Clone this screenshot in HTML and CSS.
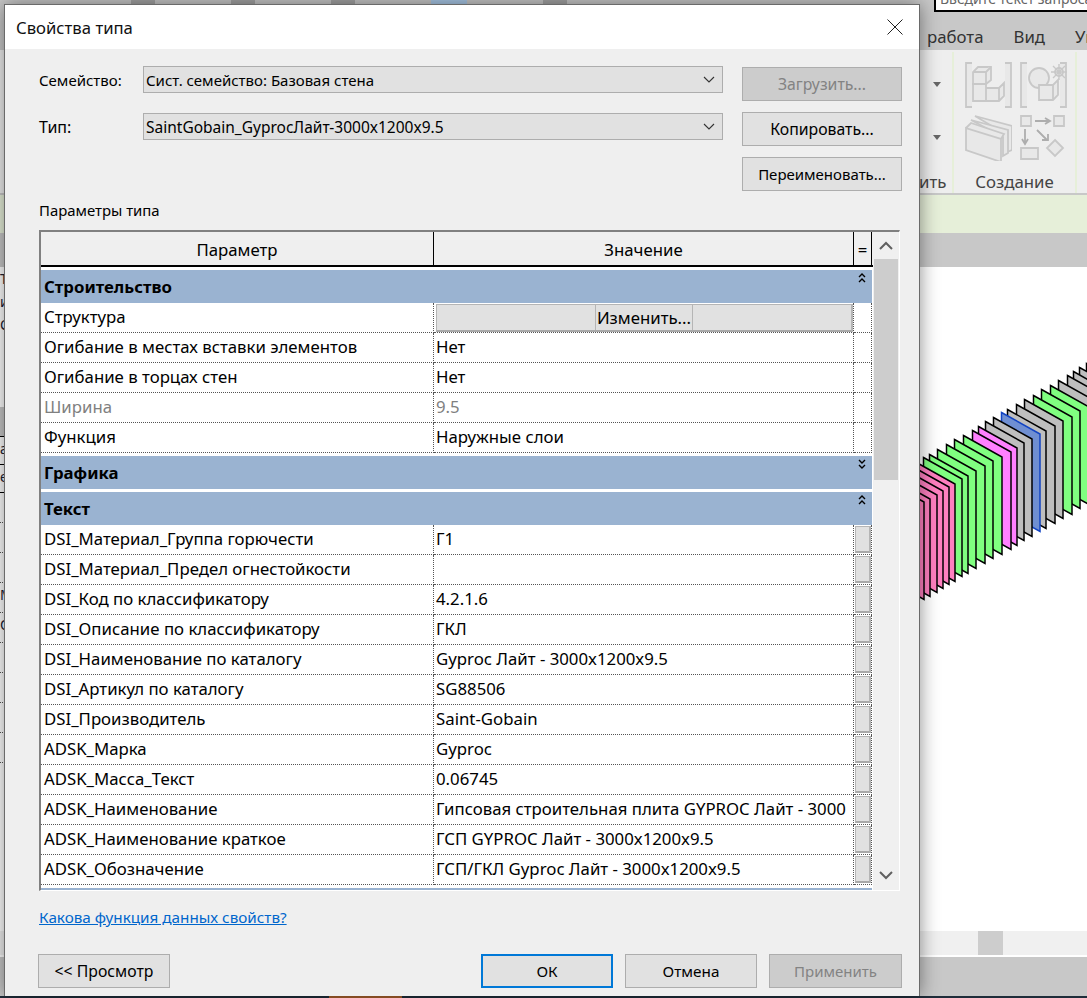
FILE: index.html
```html
<!DOCTYPE html>
<html lang="ru">
<head>
    <meta charset="UTF-8">
    <title>Свойства типа</title>
    <link rel="stylesheet" href="styles.css">
</head>
<body>
    <div class="app">
        <div class="app-top">
            <div class="quick-bar">
                <span class="quick-item"></span>
                <span class="quick-item"></span>
                <span class="quick-item"></span>
                <span class="quick-item quick-active"></span>
                <span class="quick-item"></span>
            </div>
            <div class="search-box">Введите текст запроса</div>
            <div class="tabs">
                <span>работа</span>
                <span>Вид</span>
                <span>Управление</span>
            </div>
        </div>

        <div class="ribbon">
            <div class="ribbon-panel panel-small">
                <div class="panel-body">
                    <span class="drop"></span>
                    <span class="drop"></span>
                </div>
                <span class="panel-label">ить</span>
            </div>
            <div class="ribbon-panel panel-create">
                <div class="panel-icons">
                    <svg class="ribbon-icon" viewBox="0 0 47 46">
                        <path d="M7 1H1V45H7M40 1H46V45H40"/>
                        <path d="M8 22V10L13 5H26V18L21 22Z"/>
                        <path d="M8 10H21L26 5M21 10V22"/>
                        <path d="M8 22H21V39H8ZM21 26H34L39 21V34L34 39H21ZM34 26V39"/>
                    </svg>
                    <svg class="ribbon-icon" viewBox="0 0 47 46">
                        <path d="M7 1H1V45H7M40 1H46V45H40"/>
                        <circle cx="19" cy="16" r="10"/>
                        <circle cx="39" cy="10" r="4"/>
                        <path d="M39 2V18M31 10H47M33 4L45 16M45 4L33 16" class="thin"/>
                        <path d="M19 23H33L38 18V33L33 38H19ZM33 23V38"/>
                    </svg>
                    <svg class="ribbon-icon" viewBox="0 0 47 46">
                        <path d="M10 1L47 11V35L42 37V20Z"/>
                        <path d="M6 5L43 15V38L38 41V22Z"/>
                        <path d="M1 13L6 8L39 19L36 24ZM1 13L36 24V47L1 35Z"/>
                    </svg>
                    <svg class="ribbon-icon" viewBox="0 0 47 46">
                        <path d="M1 1H11V11H1ZM34 1H44V11H34ZM1 33H18V44H1ZM35 25L43 33L35 41L27 33Z"/>
                        <path d="M15 6H29M25 3L30 6L25 9M5 14V28M2 24L5 29L8 24M17 15L27 25M22 25H28V19" class="dark"/>
                    </svg>
                </div>
                <span class="panel-label">Создание</span>
            </div>
            <div class="ribbon-rest"></div>
        </div>

        <div class="context-bar"></div>
        <div class="view-tabs"></div>

        <div class="canvas">
            <div class="side-list">
                <span class="side-row">Т</span>
                <span class="side-row">и</span>
                <span class="side-row">С</span>
                <span class="side-gap"></span>
                <span class="side-head"></span>
                <span class="side-row side-line">а</span>
                <span class="side-row side-line">е</span>
                <span class="side-row side-dots"></span>
                <span class="side-row side-dots"></span>
                <span class="side-row side-dots"></span>
                <span class="side-row side-dots">М</span>
                <span class="side-row side-dots">О</span>
                <span class="side-row side-dots"></span>
                <span class="side-row side-dots"></span>
                <span class="side-row side-dots"></span>
                <span class="side-row side-dots"></span>
            </div>
            <svg class="walls" viewBox="880 350 207 260">
                <defs>
                    <polygon id="plate" points="0,0 38.5,21.5 38.5,119 0,97.5"/>
                </defs>
                <g class="plate-gray">
                    <use href="#plate" x="1086.5" y="363.5"/>
                    <use href="#plate" x="1079.5" y="367.5"/>
                    <use href="#plate" x="1073.5" y="371.5"/>
                    <use href="#plate" x="1067.5" y="375.5"/>
                    <use href="#plate" x="1058.5" y="380.5"/>
                </g>
                <g class="plate-green">
                    <use href="#plate" x="1050.5" y="385.5"/>
                    <use href="#plate" x="1041.5" y="389.5"/>
                    <use href="#plate" x="1033.5" y="395.5"/>
                </g>
                <g class="plate-gray">
                    <use href="#plate" x="1024.5" y="399.5"/>
                    <use href="#plate" x="1016.5" y="404.5"/>
                    <use href="#plate" x="1007.5" y="409.5"/>
                </g>
                <g class="plate-blue">
                    <use href="#plate" x="1001.5" y="412.5"/>
                </g>
                <g class="plate-gray">
                    <use href="#plate" x="993.5" y="417.5"/>
                    <use href="#plate" x="985.5" y="421.5"/>
                </g>
                <g class="plate-magenta">
                    <use href="#plate" x="978.5" y="426.5"/>
                    <use href="#plate" x="972.5" y="430.5"/>
                </g>
                <g class="plate-green">
                    <use href="#plate" x="963.5" y="435.5"/>
                    <use href="#plate" x="954.5" y="439.5"/>
                    <use href="#plate" x="946.5" y="444.5"/>
                    <use href="#plate" x="937.5" y="449.5"/>
                    <use href="#plate" x="929.5" y="454.5"/>
                    <use href="#plate" x="923.5" y="457.5"/>
                </g>
                <g class="plate-pink">
                    <use href="#plate" x="916.5" y="462.5"/>
                    <use href="#plate" x="910.5" y="465.5"/>
                    <use href="#plate" x="904.5" y="469.5"/>
                    <use href="#plate" x="898.5" y="473.5"/>
                    <use href="#plate" x="891.5" y="477.5"/>
                    <use href="#plate" x="885.5" y="480.5"/>
                </g>
            </svg>
        </div>

        <div class="hscroll"><span class="hscroll-thumb"></span></div>
        <div class="status-bar"></div>
        <div class="taskbar"><span class="task-active"></span></div>
    </div>

    <div class="dialog">
        <div class="title-bar">
            <span>Свойства типа</span>
            <svg class="close-icon" viewBox="0 0 16 16">
                <path d="M0.5 0.5L15.5 15.5M15.5 0.5L0.5 15.5"/>
            </svg>
        </div>

        <div class="dialog-body">
            <div class="top-section">
                <div class="selects">
                    <div class="select-row">
                        <span class="select-label">Семейство:</span>
                        <div class="select">
                            <span>Сист. семейство: Базовая стена</span>
                            <svg class="select-arrow" viewBox="0 0 12 7"><path d="M1 1L6 6L11 1"/></svg>
                        </div>
                    </div>
                    <div class="select-row">
                        <span class="select-label label-type">Тип:</span>
                        <div class="select">
                            <span class="select-type">SaintGobain_GyprocЛайт-3000x1200x9.5</span>
                            <svg class="select-arrow" viewBox="0 0 12 7"><path d="M1 1L6 6L11 1"/></svg>
                        </div>
                    </div>
                </div>
                <div class="side-buttons">
                    <button class="btn btn-disabled">Загрузить...</button>
                    <button class="btn">Копировать...</button>
                    <button class="btn btn-rename">Переименовать...</button>
                </div>
            </div>

            <div class="section-title">Параметры типа</div>

            <div class="table-box">
                <div class="grid">
                    <div class="grid-head">
                        <span class="head-cell col-name">Параметр</span>
                        <span class="head-cell col-value">Значение</span>
                        <span class="head-cell col-extra">=</span>
                    </div>

                    <div class="group">
                        <span>Строительство</span>
                        <svg class="fold" viewBox="0 0 8 10"><path d="M1 4L4 1L7 4M1 9L4 6L7 9"/></svg>
                    </div>
                    <div class="row">
                        <span class="cell col-name">Структура</span>
                        <span class="cell col-value cell-button"><span class="wide-button"><span class="wide-button-label">Изменить...</span></span></span>
                        <span class="cell col-extra"></span>
                    </div>
                    <div class="row">
                        <span class="cell col-name">Огибание в местах вставки элементов</span>
                        <span class="cell col-value">Нет</span>
                        <span class="cell col-extra"></span>
                    </div>
                    <div class="row">
                        <span class="cell col-name">Огибание в торцах стен</span>
                        <span class="cell col-value">Нет</span>
                        <span class="cell col-extra"></span>
                    </div>
                    <div class="row row-off">
                        <span class="cell col-name">Ширина</span>
                        <span class="cell col-value">9.5</span>
                        <span class="cell col-extra"></span>
                    </div>
                    <div class="row">
                        <span class="cell col-name">Функция</span>
                        <span class="cell col-value">Наружные слои</span>
                        <span class="cell col-extra"></span>
                    </div>

                    <div class="group">
                        <span>Графика</span>
                        <svg class="fold" viewBox="0 0 8 10"><path d="M1 1L4 4L7 1M1 6L4 9L7 6"/></svg>
                    </div>
                    <div class="group">
                        <span>Текст</span>
                        <svg class="fold" viewBox="0 0 8 10"><path d="M1 4L4 1L7 4M1 9L4 6L7 9"/></svg>
                    </div>

                    <div class="row">
                        <span class="cell col-name">DSI_Материал_Группа горючести</span>
                        <span class="cell col-value">Г1</span>
                        <span class="cell col-extra"><span class="small-button"></span></span>
                    </div>
                    <div class="row">
                        <span class="cell col-name">DSI_Материал_Предел огнестойкости</span>
                        <span class="cell col-value"></span>
                        <span class="cell col-extra"><span class="small-button"></span></span>
                    </div>
                    <div class="row">
                        <span class="cell col-name">DSI_Код по классификатору</span>
                        <span class="cell col-value">4.2.1.6</span>
                        <span class="cell col-extra"><span class="small-button"></span></span>
                    </div>
                    <div class="row">
                        <span class="cell col-name">DSI_Описание по классификатору</span>
                        <span class="cell col-value">ГКЛ</span>
                        <span class="cell col-extra"><span class="small-button"></span></span>
                    </div>
                    <div class="row">
                        <span class="cell col-name">DSI_Наименование по каталогу</span>
                        <span class="cell col-value">Gyproc Лайт - 3000x1200x9.5</span>
                        <span class="cell col-extra"><span class="small-button"></span></span>
                    </div>
                    <div class="row">
                        <span class="cell col-name">DSI_Артикул по каталогу</span>
                        <span class="cell col-value">SG88506</span>
                        <span class="cell col-extra"><span class="small-button"></span></span>
                    </div>
                    <div class="row">
                        <span class="cell col-name">DSI_Производитель</span>
                        <span class="cell col-value">Saint-Gobain</span>
                        <span class="cell col-extra"><span class="small-button"></span></span>
                    </div>
                    <div class="row">
                        <span class="cell col-name">ADSK_Марка</span>
                        <span class="cell col-value">Gyproc</span>
                        <span class="cell col-extra"><span class="small-button"></span></span>
                    </div>
                    <div class="row">
                        <span class="cell col-name">ADSK_Масса_Текст</span>
                        <span class="cell col-value">0.06745</span>
                        <span class="cell col-extra"><span class="small-button"></span></span>
                    </div>
                    <div class="row">
                        <span class="cell col-name">ADSK_Наименование</span>
                        <span class="cell col-value">Гипсовая строительная плита GYPROC Лайт - 3000</span>
                        <span class="cell col-extra"><span class="small-button"></span></span>
                    </div>
                    <div class="row">
                        <span class="cell col-name">ADSK_Наименование краткое</span>
                        <span class="cell col-value">ГСП GYPROC Лайт - 3000x1200x9.5</span>
                        <span class="cell col-extra"><span class="small-button"></span></span>
                    </div>
                    <div class="row">
                        <span class="cell col-name">ADSK_Обозначение</span>
                        <span class="cell col-value">ГСП/ГКЛ Gyproc Лайт - 3000x1200x9.5</span>
                        <span class="cell col-extra"><span class="small-button"></span></span>
                    </div>
                    <div class="group"></div>
                </div>

                <div class="scrollbar">
                    <svg class="scroll-arrow" viewBox="0 0 14 9"><path d="M1 8L7 2L13 8"/></svg>
                    <div class="scroll-thumb"></div>
                    <svg class="scroll-arrow scroll-down" viewBox="0 0 14 9"><path d="M1 1L7 7L13 1"/></svg>
                </div>
            </div>

            <a class="help-link" href="#">Какова функция данных свойств?</a>

            <div class="footer">
                <button class="btn btn-preview">&lt;&lt; Просмотр</button>
                <div class="footer-right">
                    <button class="btn btn-ok">ОК</button>
                    <button class="btn">Отмена</button>
                    <button class="btn btn-disabled btn-apply">Применить</button>
                </div>
            </div>
        </div>
    </div>
</body>
</html>
```

FILE: styles.css
```css
* {
    box-sizing: border-box;
}

body {
    margin: 0;
    width: 1087px;
    height: 998px;
    overflow: hidden;
    position: relative;
    font-family: "Noto Sans", sans-serif;
    font-size: 15px;
    color: #000;
}

/* application behind the dialog */
.app {
    width: 1087px;
    height: 998px;
    display: flex;
    flex-direction: column;
    background: #fff;
}

.app-top {
    height: 50px;
    background: #c8c8c8;
    position: relative;
    overflow: hidden;
}

.quick-bar {
    display: flex;
    gap: 76px;
    padding-left: 131px;
    height: 4px;
}
.quick-item {
    width: 24px;
    background: #a4a4a4;
}
.quick-active {
    width: 36px;
    background: #a9c7e6;
}

.search-box {
    position: absolute;
    top: -6px;
    left: 934px;
    width: 170px;
    height: 18px;
    border: 2px solid #000;
    background: #fff;
    font-size: 14px;
    line-height: 6px;
    padding-left: 4px;
    color: #666;
    white-space: nowrap;
    overflow: hidden;
}

.tabs {
    display: flex;
    gap: 30px;
    padding: 22px 0 0 927px;
    font-size: 16.8px;
    color: #333;
    line-height: 22px;
    white-space: nowrap;
}

.ribbon {
    height: 145px;
    display: flex;
    justify-content: flex-end;
    background: #eeeeee;
    border-bottom: 2px solid #c8c8c8;
    padding-top: 2px;
}
.ribbon-panel {
    display: flex;
    flex-direction: column;
    border-right: 2px solid #e6efd9;
}
.panel-small {
    width: 35px;
}
.panel-body {
    flex: 1;
    display: flex;
    flex-direction: column;
    align-items: flex-end;
    padding: 30px 11px 0 0;
    gap: 48px;
}
.drop {
    width: 0;
    height: 0;
    border-left: 4px solid transparent;
    border-right: 4px solid transparent;
    border-top: 5px solid #666;
}
.panel-label {
    height: 28px;
    text-align: center;
    line-height: 34px;
    font-size: 16.8px;
    color: #444;
    white-space: nowrap;
}
.panel-small .panel-label {
    text-align: right;
    padding-right: 7px;
}
.panel-create {
    width: 123px;
}
.panel-icons {
    flex: 1;
    display: grid;
    grid-template-columns: 47px 47px;
    grid-auto-rows: 46px;
    gap: 7px 8px;
    padding: 10px 0 0 11px;
}
.ribbon-icon {
    width: 47px;
    height: 46px;
    fill: #e8e8e8;
    stroke: #c8c8c8;
    stroke-width: 1.8;
}
.ribbon-icon .thin {
    stroke-width: 1.4;
}
.ribbon-icon .dark {
    fill: none;
    stroke: #adadad;
}
.ribbon-rest {
    width: 10px;
}

.context-bar {
    height: 38px;
    background: #e6efd9;
}
.view-tabs {
    height: 34px;
    background: #c8c8c8;
}

.canvas {
    flex: 1;
    position: relative;
    overflow: hidden;
    background: #fff;
}
.side-list {
    width: 5px;
    overflow: hidden;
    display: flex;
    flex-direction: column;
    font-size: 14px;
    color: #223;
}
.side-row {
    height: 23px;
    flex: none;
    line-height: 23px;
}
.side-gap {
    height: 71px;
    flex: none;
}
.side-head {
    height: 30px;
    flex: none;
    background: #c8c8c8;
    border-bottom: 1px solid #000;
}
.side-line {
    height: 28px;
    border-bottom: 1px solid #000;
}
.side-dots {
    height: 30px;
    border-bottom: 1px dotted #555;
}

.walls {
    position: absolute;
    left: 880px;
    top: 83px;
    width: 207px;
    height: 260px;
    stroke: #000;
    stroke-width: 1.5;
}
.plate-gray { fill: #bebebe; }
.plate-green { fill: #80ff80; }
.plate-magenta { fill: #ff80ff; }
.plate-pink { fill: #ff80c0; }
.plate-blue {
    fill: #6f8fd2;
    stroke: #1244c4;
}

.hscroll {
    height: 24px;
    background: #f0f0f0;
    padding-left: 978px;
}
.hscroll-thumb {
    display: block;
    width: 25px;
    height: 24px;
    background: #cdcdcd;
}
.status-bar {
    height: 39px;
    margin-top: 2px;
    background: #c8c8c8;
}
.taskbar {
    height: 2px;
    background: #1f2d3a;
    padding-left: 329px;
}
.task-active {
    display: block;
    width: 73px;
    height: 2px;
    background: #a8602c;
}

/* dialog */
.dialog {
    position: absolute;
    left: 4px;
    top: 4px;
    width: 916px;
    height: 992px;
    display: flex;
    flex-direction: column;
    background: #efefef;
    border: 1px solid #6a6a6a;
    border-bottom: 0;
    box-shadow: 0 0 18px rgba(0, 0, 0, 0.45);
}

.title-bar {
    height: 44px;
    flex: none;
    display: flex;
    align-items: center;
    justify-content: space-between;
    padding: 0 16px 0 11px;
    background: #fff;
    font-size: 16.7px;
    color: #111;
}
.close-icon {
    width: 16px;
    height: 16px;
    fill: none;
    stroke: #222;
    stroke-width: 1;
}

.dialog-body {
    flex: 1;
    padding: 17px 17px 0 34px;
    display: flex;
    flex-direction: column;
}

.top-section {
    display: flex;
    justify-content: space-between;
    height: 125px;
}
.selects {
    width: 684px;
    display: flex;
    flex-direction: column;
    gap: 20px;
}
.select-row {
    display: flex;
    align-items: center;
}
.select-label {
    width: 104px;
}
.label-type {
    font-size: 16px;
}
.select {
    flex: 1;
    height: 27px;
    display: flex;
    align-items: center;
    justify-content: space-between;
    padding: 0 7px 0 2px;
    background: #e1e1e1;
    border: 1px solid #adadad;
    white-space: nowrap;
}
.select-type {
    font-size: 15.5px;
}
.select-arrow {
    width: 12px;
    height: 7px;
    fill: none;
    stroke: #333;
    stroke-width: 1.1;
}

.side-buttons {
    width: 160px;
    display: flex;
    flex-direction: column;
    gap: 11px;
    padding-top: 1px;
}

.btn {
    width: 100%;
    height: 34px;
    padding: 0 0 1px;
    font: inherit;
    font-size: 15.8px;
    color: #000;
    background: #e1e1e1;
    border: 1px solid #adadad;
}
.btn-rename,
.btn-apply {
    font-size: 15px;
}
.btn-disabled {
    background: #cccccc;
    color: #838383;
}

.section-title {
    height: 39px;
    padding-top: 9px;
    line-height: 20px;
    font-size: 14.9px;
}

.table-box {
    width: 861px;
    height: 661px;
    flex: none;
    display: flex;
    font-size: 16.8px;
    border-top: 2px solid #808080;
    border-left: 2px solid #808080;
    border-right: 1px solid #fff;
    border-bottom: 1px solid #fff;
    overflow: hidden;
}

.grid {
    width: 832px;
    flex: none;
    background: #fff;
    overflow: hidden;
}

.col-name {
    width: 393px;
}
.col-value {
    width: 420px;
}
.col-extra {
    width: 18px;
}

.grid-head {
    height: 35px;
    display: flex;
    background: #efefef;
    border-bottom: 2px solid #000;
}
.head-cell {
    display: flex;
    align-items: center;
    justify-content: center;
    padding-top: 1px;
    border-right: 1px solid #000;
}

.group {
    height: 33px;
    width: 831px;
    margin-top: 3px;
    padding-left: 3px;
    display: flex;
    align-items: center;
    justify-content: space-between;
    background: #9ab3d1;
    font-weight: bold;
    flex: none;
}
.fold {
    width: 8px;
    height: 10px;
    margin: -17px 6px 0 0;
    fill: none;
    stroke: #000;
    stroke-width: 1.4;
}

.row {
    height: 30px;
    width: 831px;
    display: flex;
}
.row-off {
    color: #808080;
}
.cell {
    display: block;
    height: 30px;
    line-height: 28px;
    padding-left: 3px;
    border-right: 1px dotted #555;
    border-bottom: 1px dotted #555;
    white-space: nowrap;
    overflow: hidden;
}
.cell.col-value {
    padding-left: 2px;
}
.cell.col-extra {
    padding: 0;
}
.cell.cell-button {
    padding: 1px 0 0 2px;
}

.wide-button {
    display: flex;
    justify-content: center;
    height: 28px;
    background: #e1e1e1;
    border: 1px solid #b5b5b5;
    border-right-width: 2px;
    border-bottom-width: 2px;
    border-bottom-color: #a8a8a8;
}
.wide-button-label {
    width: 98px;
    text-align: center;
    line-height: 26px;
    border-left: 1px solid #b5b5b5;
    border-right: 1px solid #b5b5b5;
}

.small-button {
    display: block;
    margin: 1px 0 0 1px;
    width: 16px;
    height: 27px;
    background: #e1e1e1;
    border: 1px solid #b5b5b5;
    border-right-width: 2px;
    border-bottom-width: 2px;
    border-bottom-color: #a8a8a8;
}

.scrollbar {
    width: 26px;
    flex: none;
    display: flex;
    flex-direction: column;
    align-items: center;
    position: relative;
    background: #f0f0f0;
}
.scroll-arrow {
    width: 14px;
    height: 9px;
    flex: none;
    margin: 9px 0;
    fill: none;
    stroke: #606060;
    stroke-width: 2;
}
.scroll-thumb {
    width: 24px;
    height: 221px;
    background: #cdcdcd;
}
.scroll-down {
    margin: auto 0 10px;
}

.help-link {
    display: block;
    margin-top: 16px;
    line-height: 20px;
    width: max-content;
    font-size: 15.25px;
    color: #0066cc;
}

.footer {
    margin-top: 27px;
    margin-left: -1px;
    display: flex;
    justify-content: space-between;
}
.btn-preview {
    width: 132px;
}
.footer-right {
    display: flex;
    gap: 12px;
}
.footer-right .btn {
    width: 132px;
    font-size: 15.3px;
}
.footer-right .btn-apply {
    width: 133px;
    font-size: 15px;
}
.btn-ok {
    border: 2px solid #0078d7;
}
```
